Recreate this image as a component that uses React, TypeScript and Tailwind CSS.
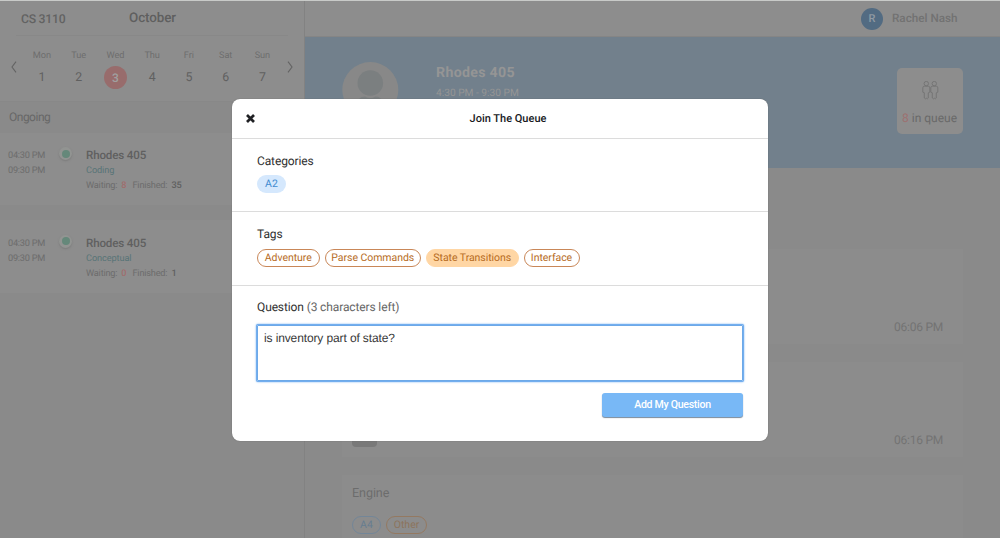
import React from "react";

const days = [
  ["Mon", 1],
  ["Tue", 2],
  ["Wed", 3],
  ["Thu", 4],
  ["Fri", 5],
  ["Sat", 6],
  ["Sun", 7],
] as const;

const sessions = [
  { kind: "Coding", waiting: 8, finished: 35 },
  { kind: "Conceptual", waiting: 0, finished: 1 },
];

function Chevron({ flip = false }: { flip?: boolean }) {
  return (
    <svg width="6" height="12" viewBox="0 0 6 12" fill="none" stroke="#636363" strokeWidth="1.1" className={flip ? "rotate-180" : ""}>
      <path d="M5 0.7 1 6l4 5.3" />
    </svg>
  );
}

function Session({ kind, waiting, finished }: { kind: string; waiting: number; finished: number }) {
  return (
    <div className="mb-[15px] flex h-[72.5px] bg-[#8d8d8d] pt-[14.5px] text-[9.2px] leading-[15px] text-[#6c6c6c]">
      <div className="w-[50px] pt-px pl-2 tracking-[-0.25px] whitespace-nowrap">
        <div>04:30 PM</div>
        <div>09:30 PM</div>
      </div>
      <div className="ml-[9px] flex h-[13px] w-[13px] items-center justify-center rounded-full bg-[#929492] shadow-[0_1px_2px_#7b7b7b]">
        <div className="h-2 w-2 rounded-full bg-[#65887a]" />
      </div>
      <div className="ml-[14px] pt-px tracking-[-0.1px] whitespace-nowrap">
        <div className="text-[11.6px] font-medium tracking-[-0.15px] text-[#606060]">Rhodes 405</div>
        <div className="text-[#587477]">{kind}</div>
        <div className="flex">
          <span className="tracking-[-0.2px]">Waiting:</span>
          <span className="ml-1 font-medium text-[#a06d6d]">{waiting}</span>
          <span className="ml-[6px] tracking-[-0.2px]">Finished:</span>
          <span className="ml-1 font-medium text-[#606060]">{finished}</span>
        </div>
      </div>
    </div>
  );
}

function Sidebar() {
  return (
    <aside className="w-[305px] shrink-0 border-r border-[#828282] bg-[#8a8a8a]">
      <div className="h-[101px] border-b border-[#888888] bg-[#8d8d8d]">
        <div className="mx-4 flex h-[35px] border-b border-[#888888] font-medium text-[#626262]">
          <div className="w-[113px] pl-[5px] text-[12.2px] leading-[36px] tracking-[-0.25px]">CS 3110</div>
          <div className="text-[13.4px] leading-[35px] tracking-[-0.1px] text-[#5f5f5f]">October</div>
        </div>
        <div className="flex pt-[10px]">
          <div className="flex w-[23.5px] justify-center pt-[15px] pl-[5px]"><Chevron /></div>
          {days.map(([name, n]) => (
            <div key={name} className="flex w-[36.75px] flex-col items-center">
              <div className="h-[20px] text-[9.2px] leading-[19px] tracking-[-0.1px] text-[#6e6e6e]">{name}</div>
              {n === 3 ? (
                <div className="h-[23px] w-[23px] rounded-full bg-[#986c6c] text-center text-[12px] leading-[24px] font-medium text-[#a0a0a0]">{n}</div>
              ) : (
                <div className="h-[23px] text-[12.3px] leading-[25px] text-[#606060]">{n}</div>
              )}
            </div>
          ))}
          <div className="flex w-[18px] justify-center pt-[15px]"><Chevron flip /></div>
        </div>
      </div>
      <div className="h-[30.5px] pl-[9px] text-[12px] leading-[30px] tracking-[-0.5px] text-[#676767]">Ongoing</div>
      {sessions.map((s) => <Session key={s.kind} {...s} />)}
    </aside>
  );
}

function Person({ x }: { x: number }) {
  return (
    <g transform={`translate(${x} 0)`}>
      <circle cx="4" cy="2.6" r="2.2" />
      <path d="M2 5.2H6Q7.5 5.2 7.5 6.8V11.2L6 11.8V17Q5 18.6 4 17.2Q3 18.6 2 17V11.8L.5 11.2V6.8Q.5 5.2 2 5.2Z" />
    </g>
  );
}

function Main() {
  return (
    <main className="flex min-w-0 flex-1 flex-col bg-[#8a8a8a]">
      <header className="flex h-[36px] shrink-0 items-center border-b border-[#858585] bg-[#8d8d8d] pl-[556px]">
        <div className="h-[22px] w-[22px] rounded-full bg-[#526b82] text-center text-[11px] leading-[22.5px] font-medium text-[#909aa3]">R</div>
        <div className="ml-[9px] text-[11.7px] font-medium text-[#727272]">Rachel Nash</div>
      </header>
      <section className="flex h-[131px] shrink-0 bg-[#72808c]">
        <svg className="mt-[25px] ml-[37px]" width="57" height="57" viewBox="0 0 57 57">
          <circle cx="28.3" cy="28" r="28" fill="#888888" />
          <circle cx="28.3" cy="21" r="12.8" fill="#7b7f80" />
          <path d="M15 44Q15 34.5 23 34.5Q28.3 37.5 33.6 34.5Q41 34.5 41 44Z" fill="#7b7f80" />
        </svg>
        <div className="ml-[37px] w-[461px] pt-[25.5px] text-[#959595]">
          <div className="text-[14.2px] leading-[20px] font-bold tracking-[0.3px]">Rhodes 405</div>
          <div className="text-[10.2px] leading-[21px]">4:30 PM - 9:30 PM</div>
        </div>
        <div className="mt-[31px] flex h-[66px] w-[66px] flex-col items-center rounded-[5px] bg-[#8d8d8d] pt-[13px]">
          <svg width="17" height="19" viewBox="0 0 17 19" fill="none" stroke="#737373" strokeWidth="0.9"><Person x={0.3} /><Person x={8.3} /></svg>
          <div className="mt-[9px] pr-[1px] text-[12px] leading-[18px] whitespace-nowrap text-[#696969]"><span className="text-[#9d7070]">8</span> in queue</div>
        </div>
      </section>
      <section className="flex flex-col gap-[18px] pt-[81px] pl-[37px]">
        <div className="h-[95px] w-[621px] shrink-0 bg-[#8c8c8c] pt-[68px] pr-5 text-right text-[12px] leading-[20px] tracking-[-0.25px] text-[#737373]">06:06 PM</div>
        <div className="flex h-[95px] w-[621px] shrink-0 items-end justify-between bg-[#8c8c8c] pr-5 pb-[7px] pl-[10px] text-[12px] leading-[20px] tracking-[-0.25px] text-[#737373]">
          <div className="mb-[3px] flex h-[24px] w-[25px] items-center justify-center rounded-[4px] bg-[#797979] text-[10px] text-[#8a8a8a]">•••</div>
          <div>06:16 PM</div>
        </div>
        <div className="h-[95px] w-[621px] shrink-0 bg-[#8c8c8c] pt-[8.5px] pl-[10px]">
          <div className="text-[12.6px] leading-[20px] tracking-[-0.1px] text-[#6c6c6c]">Engine</div>
          <div className="mt-3 flex gap-[5px] text-[10.5px] leading-[16.5px]">
            <div className="h-[18px] w-[29px] rounded-full border border-[#738698] text-center text-[#677d90]">A4</div>
            <div className="h-[18px] w-[41px] rounded-full border border-[#947961] text-center text-[#8d745c]">Other</div>
          </div>
        </div>
      </section>
    </main>
  );
}

function JoinModal() {
  return (
    <div role="dialog" className="absolute top-[98px] left-[232px] h-[342px] w-[536px] rounded-[8px] bg-white text-[12px] text-[#303030] shadow-[0_0_1px_#555]">
      <div className="flex h-[40px] items-center border-b border-[#dcdcdc] pl-[14px]">
        <svg width="9" height="9" viewBox="0 0 9 9" stroke="#202124" strokeWidth="2.7"><path d="M1 1 8 8M8 1 1 8" /></svg>
        <div className="flex-1 pt-[2px] pr-[7px] text-center text-[11px] font-medium text-[#17191d]">Join The Queue</div>
      </div>
      <div className="h-[73px] border-b border-[#dcdcdc] px-[25px] pt-[12px]">
        <div className="leading-[20px] tracking-[-0.12px]">Categories</div>
        <div className="mt-[4px] h-[18px] w-[29px] rounded-full bg-[#d5e8fd] text-center text-[10.5px] leading-[18px] text-[#438bd0]">A2</div>
      </div>
      <div className="h-[74px] border-b border-[#dcdcdc] px-[25px] pt-[12px]">
        <div className="leading-[20px] tracking-[-0.12px]">Tags</div>
        <div className="mt-[5px] flex gap-[5px] text-center text-[10.5px] leading-[15px] tracking-[-0.05px] text-[#b66b1d]">
          <div className="h-[18px] w-[62.5px] rounded-full border border-[#c98758]">Adventure</div>
          <div className="h-[18px] w-[96.5px] rounded-full border border-[#c98758]">Parse Commands</div>
          <div className="h-[18px] w-[92.5px] rounded-full border border-[#ffd6a4] bg-[#ffd6a4]">State Transitions</div>
          <div className="h-[18px] w-[56px] rounded-full border border-[#c98758]">Interface</div>
        </div>
      </div>
      <div className="px-[25px] pt-[11px]">
        <div className="leading-[20px] tracking-[-0.12px]">Question <span className="text-[#666]">(3 characters left)</span></div>
        <textarea
          readOnly
          value="is inventory part of state?"
          className="mt-[8px] block h-[56px] w-[486px] resize-none rounded-[1px] border border-[#6da9e8] px-[6px] pt-[4px] font-['Liberation_Sans',sans-serif] text-[12px] leading-[17px] tracking-[-0.12px] text-[#383838] shadow-[0_0_0_1px_#73aeef,0_0_2px_1px_#73aeef] outline-none"
        />
        <button className="mt-[12px] ml-auto block h-[23.5px] w-[141px] rounded-[3px] bg-[#78b8f6] text-[10.6px] leading-[22px] font-medium tracking-[-0.3px] text-white shadow-[0_1px_1px_#78899b]">Add My Question</button>
      </div>
    </div>
  );
}

export default function App() {
  return (
    <div className="relative flex h-[538px] w-[1000px] overflow-hidden border-t border-[#c8cac8] bg-[#8a8a8a] font-[Roboto,sans-serif] [text-rendering:geometricPrecision] [&_textarea]:[text-rendering:geometricPrecision]">
      <Sidebar />
      <Main />
      <JoinModal />
    </div>
  );
}
